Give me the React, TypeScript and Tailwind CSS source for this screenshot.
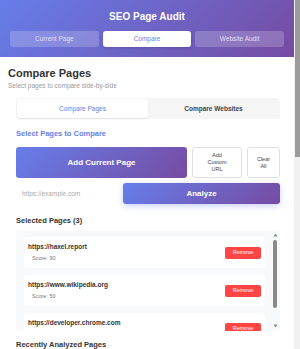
import React from "react";

const selected = [
  { url: "https://haxel.report", score: 90 },
  { url: "https://www.wikipedia.org", score: 50 },
  { url: "https://developer.chrome.com", score: 78 },
];

function Tri({ up }: { up?: boolean }) {
  return (
    <svg width="5" height="4" viewBox="0 0 5 4" className="block">
      {up ? <path d="M2.5 0.5 L4.5 3.5 L0.5 3.5 Z" fill="#8a8a8a" /> : <path d="M0.5 0.5 L4.5 0.5 L2.5 3.5 Z" fill="#8a8a8a" />}
    </svg>
  );
}

export default function App() {
  return (
    <div
      className="w-[300px] h-[349px] overflow-hidden bg-white text-[#333] flex"
      style={{ fontFamily: '"Liberation Sans", Arial, sans-serif' }}
    >
      <div className="w-[294px] shrink-0 overflow-hidden">
        <div className="bg-[linear-gradient(135deg,#667eea_0%,#764ba2_100%)] px-[10px] pt-[10px] pb-[10px]">
          <div className="h-[14px] leading-[14px] text-center text-white font-bold text-[10px]">
            SEO Page Audit
          </div>
          <div className="mt-[7px] flex gap-[4px]">
            <div className="flex-1 h-[16px] rounded-[3px] bg-white/20 text-white/75 text-[6.5px] flex items-center justify-center">
              Current Page
            </div>
            <div className="flex-1 h-[16px] rounded-[3px] bg-white text-[#667eea] text-[6.5px] flex items-center justify-center shadow-[0_1px_3px_rgba(0,0,0,0.15)]">
              Compare
            </div>
            <div className="flex-1 h-[16px] rounded-[3px] bg-white/20 text-white/75 text-[6.5px] flex items-center justify-center">
              Website Audit
            </div>
          </div>
        </div>

        <div className="px-[8px]">
          <div className="pt-[9px] text-[11px] leading-[14px] font-bold text-[#333]">Compare Pages</div>
          <div className="mt-[1px] text-[6.5px] leading-[9px] text-[#999]">
            Select pages to compare side-by-side
          </div>

          <div className="pl-[8px] pr-[6px]">
            <div className="mt-[8px] h-[21px] rounded-[4px] bg-[#f5f5f5] p-[1px] flex">
              <div className="flex-1 rounded-[3px] bg-white text-[#667eea] text-[6.5px] flex items-center justify-center shadow-[0_1px_2px_rgba(0,0,0,0.08)]">
                Compare Pages
              </div>
              <div className="flex-1 text-[#444] text-[6.5px] font-semibold flex items-center justify-center">
                Compare Websites
              </div>
            </div>

            <div className="mt-[10px] h-[10px] leading-[10px] text-[7.5px] font-semibold text-[#667eea]">
              Select Pages to Compare
            </div>

            <div className="mt-[8px] flex gap-[5px] h-[31px]">
              <button className="flex-1 rounded-[3px] bg-[linear-gradient(135deg,#667eea_0%,#764ba2_100%)] text-white font-bold text-[8px]">
                Add Current Page
              </button>
              <button className="w-[50px] rounded-[3px] bg-white border border-[#e0e0e0] text-[#444] text-[5.5px] leading-[7px]">
                Add
                <br />
                Custom
                <br />
                URL
              </button>
              <button className="w-[33px] rounded-[3px] bg-white border border-[#e0e0e0] text-[#444] text-[5.5px] leading-[7px]">
                Clear
                <br />
                All
              </button>
            </div>

            <div className="mt-[5px] flex gap-[5px] h-[21px]">
              <input
                className="w-[102px] px-[6px] text-[6.5px] bg-white outline-none placeholder:text-[#aaa]"
                placeholder="https://example.com"
              />
              <button className="flex-1 rounded-[3px] bg-[linear-gradient(135deg,#667eea_0%,#764ba2_100%)] text-white font-bold text-[8px] shadow-[0_2px_6px_rgba(102,126,234,0.35)]">
                Analyze
              </button>
            </div>

            <div className="mt-[12px] h-[10px] leading-[10px] text-[7.5px] font-bold text-[#333]">
              Selected Pages (3)
            </div>

            <div className="mt-[5px] h-[100px] rounded-[4px] bg-[#f8f9fa] flex overflow-hidden">
              <div className="flex-1 overflow-hidden pl-[8px] pr-[5px] pt-[6px] flex flex-col gap-[7px]">
                {selected.map((s) => (
                  <div
                    key={s.url}
                    className="h-[31px] shrink-0 rounded-[3px] bg-white pl-[4px] pr-[4px] flex items-center justify-between"
                  >
                    <div className="flex flex-col">
                      <div className="text-[6.5px] leading-[8px] font-bold text-[#333]">{s.url}</div>
                      <div className="mt-[4px] pl-[4px] text-[5.5px] leading-[7px] text-[#777]">Score: {s.score}</div>
                    </div>
                    <button className="w-[36px] h-[12px] rounded-[2px] bg-[#ff4444] text-white text-[5.5px]">
                      Remove
                    </button>
                  </div>
                ))}
              </div>
              <div className="w-[10px] shrink-0 flex flex-col items-center pt-[2px] pb-[3px]">
                <Tri up />
                <div className="mt-[3px] w-[4px] h-[68px] rounded-full bg-[#8a8a8a]" />
                <div className="flex-1" />
                <Tri />
              </div>
            </div>

            <div className="mt-[9px] h-[10px] leading-[10px] text-[7.5px] font-bold text-[#333]">
              Recently Analyzed Pages
            </div>
          </div>
        </div>
      </div>
      <div className="w-[6px] shrink-0 bg-[#f1f1f1] flex justify-end">
        <div className="w-[5px] h-[157px] bg-[#9b9b9b]" />
      </div>
    </div>
  );
}
